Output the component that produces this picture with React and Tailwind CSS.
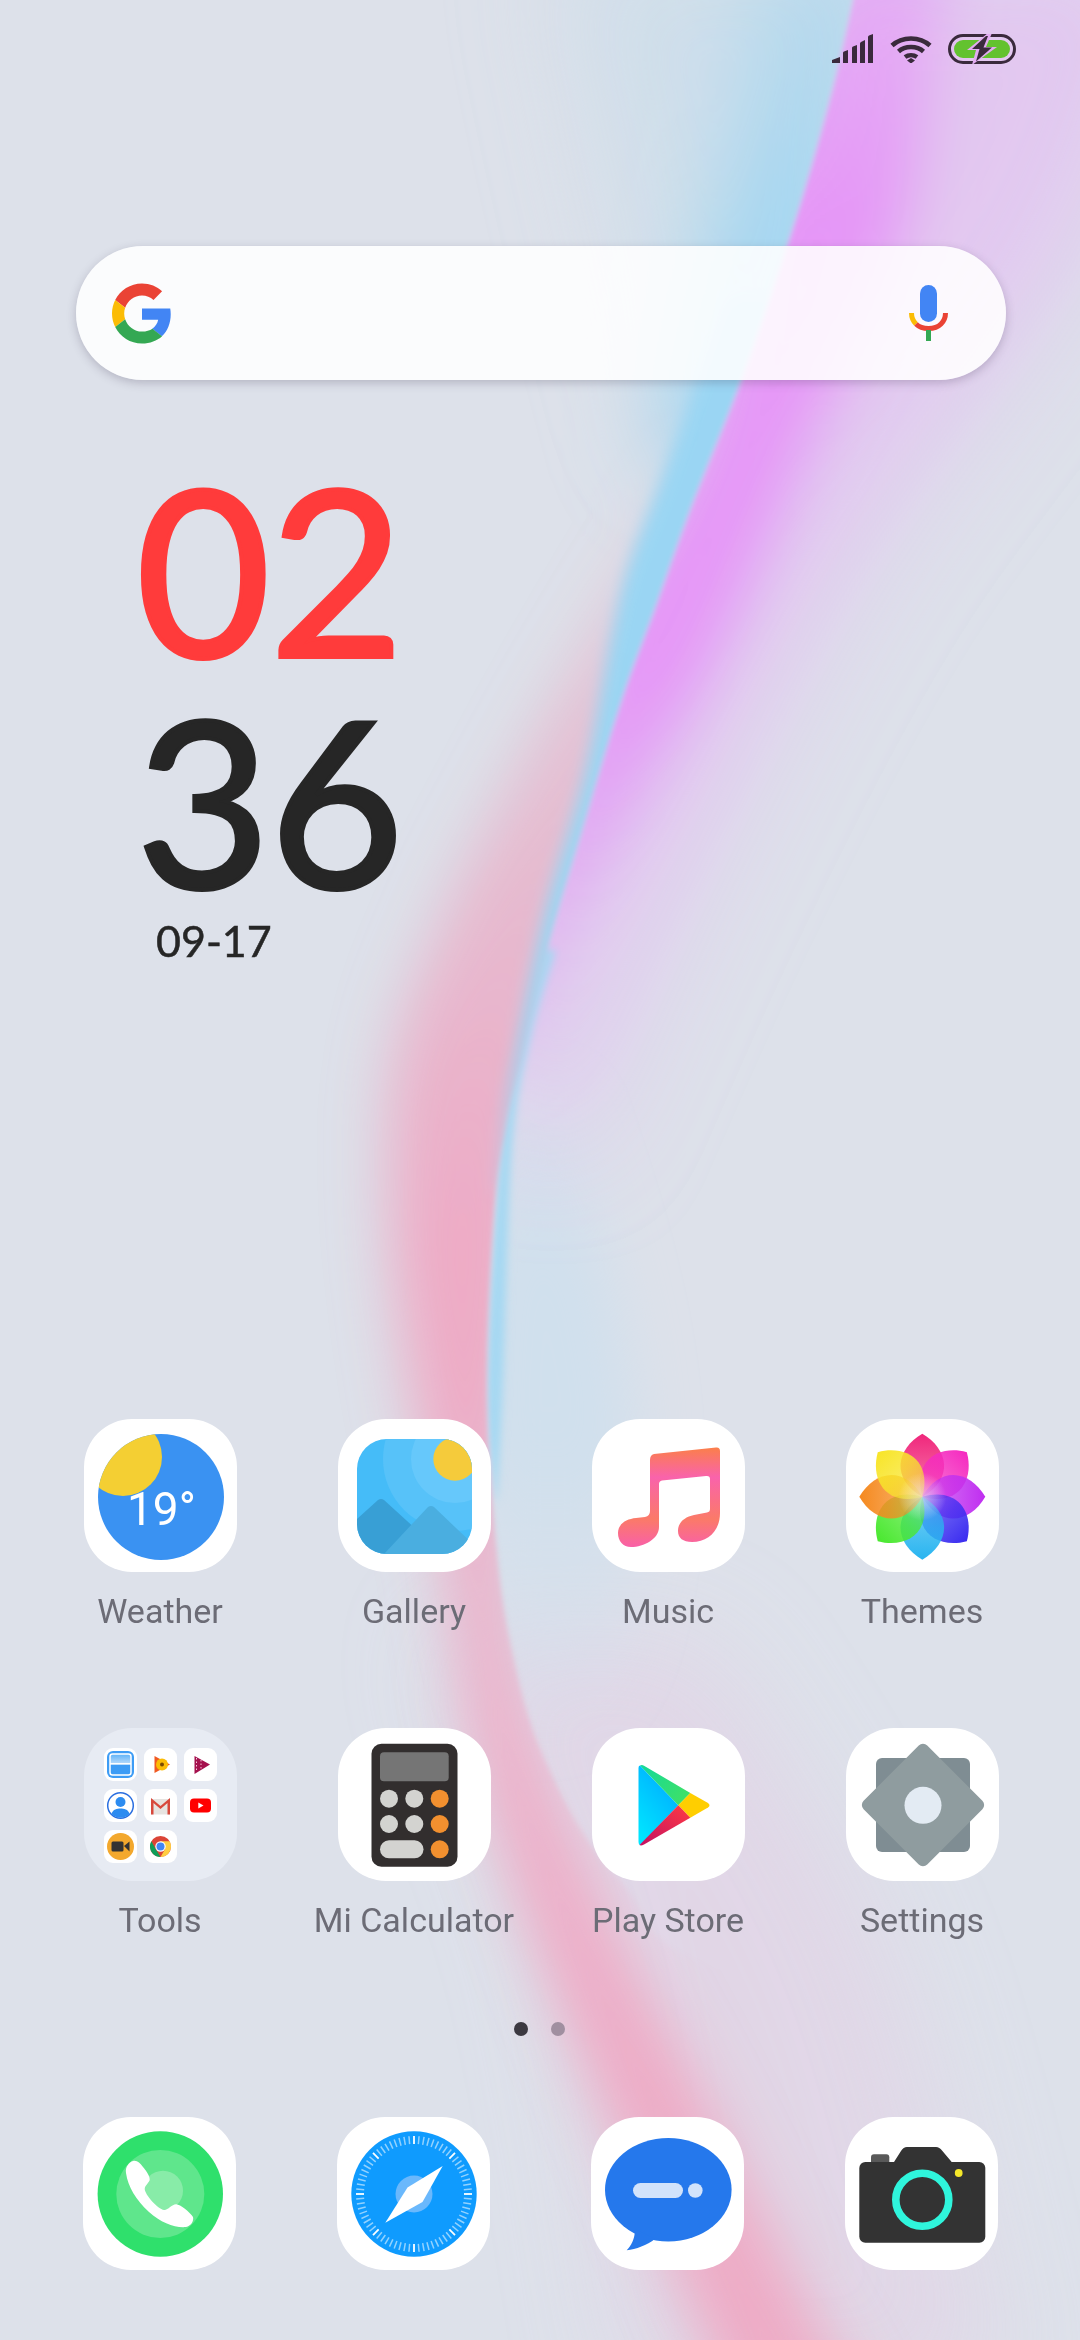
import React from "react";

// smooth line through points, returned as svg path segments
function curve(pts) {
  let d = "";
  for (let i = 0; i < pts.length - 1; i++) {
    const p0 = pts[i - 1] || pts[i];
    const p1 = pts[i];
    const p2 = pts[i + 1];
    const p3 = pts[i + 2] || p2;
    const c1 = [p1[0] + (p2[0] - p0[0]) / 6, p1[1] + (p2[1] - p0[1]) / 6];
    const c2 = [p2[0] - (p3[0] - p1[0]) / 6, p2[1] - (p3[1] - p1[1]) / 6];
    d += ` C${c1[0]} ${c1[1]} ${c2[0]} ${c2[1]} ${p2[0]} ${p2[1]}`;
  }
  return d;
}

function band(inner, outer) {
  const back = [...outer].reverse();
  return `M${inner[0][0]} ${inner[0][1]}${curve(inner)} L${back[0][0]} ${back[0][1]}${curve(back)} Z`;
}

const edge = [[866, -60], [853, 0], [832, 91], [796, 218], [745, 370], [692, 505], [657, 603], [621, 702], [585, 821], [550, 940], [523, 1053], [507, 1120], [494, 1214], [487, 1385], [494, 1520], [510, 1641], [545, 1760], [620, 1880], [760, 1980], [1400, 2050]];
const edgeD = `M${edge[0][0]} ${edge[0][1]}${curve(edge)}`;

function Wallpaper() {
  const blurBox = { filterUnits: "userSpaceOnUse", x: -300, y: -300, width: 1680, height: 2940 };
  return (
    <svg className="absolute inset-0" width="1080" height="2340" viewBox="0 0 1080 2340">
      <defs>
        <filter id="b2" {...blurBox}><feGaussianBlur stdDeviation="2.500" /></filter>
        <filter id="b3" {...blurBox}><feGaussianBlur stdDeviation="3" /></filter>
        <filter id="b8" {...blurBox}><feGaussianBlur stdDeviation="8" /></filter>
        <filter id="b30" {...blurBox}><feGaussianBlur stdDeviation="30" /></filter>
        <filter id="b45" {...blurBox}><feGaussianBlur stdDeviation="45" /></filter>
        <filter id="b55" {...blurBox}><feGaussianBlur stdDeviation="55" /></filter>
        <clipPath id="rightOf"><path d={`${edgeD} L1400 -60 Z`} /></clipPath>
        <clipPath id="leftOf"><path d={`${edgeD} L1400 2600 L-200 2600 L-200 -60 Z`} /></clipPath>
        <linearGradient id="pinkFade" gradientUnits="userSpaceOnUse" x1="0" y1="430" x2="0" y2="1250">
          <stop offset="0" stopColor="#eeaac5" stopOpacity="0" />
          <stop offset="0.35" stopColor="#e6b6cc" stopOpacity="0.75" />
          <stop offset="1" stopColor="#eeaac5" />
        </linearGradient>
        <linearGradient id="blueFade" gradientUnits="userSpaceOnUse" x1="0" y1="1100" x2="0" y2="1740">
          <stop offset="0" stopColor="#d0e0ed" stopOpacity="0.4" />
          <stop offset="0.25" stopColor="#d0e0ed" />
          <stop offset="0.55" stopColor="#d0e0ed" />
          <stop offset="1" stopColor="#d0e0ed" stopOpacity="0" />
        </linearGradient>
        <linearGradient id="magentaFade" gradientUnits="userSpaceOnUse" x1="0" y1="0" x2="0" y2="1100">
          <stop offset="0" stopColor="#e596f7" stopOpacity="0.55" />
          <stop offset="0.2" stopColor="#e596f7" />
          <stop offset="0.62" stopColor="#e596f7" />
          <stop offset="1" stopColor="#e0a8f2" stopOpacity="0.4" />
        </linearGradient>
        <linearGradient id="skyFade" gradientUnits="userSpaceOnUse" x1="0" y1="0" x2="0" y2="230">
          <stop offset="0" stopColor="#a6d6ef" stopOpacity="0.6" />
          <stop offset="1" stopColor="#9dd5f2" />
        </linearGradient>
      </defs>
      <rect width="1080" height="2340" fill="#dde1ea" />

      {/* soft tints behind the ribbons */}
      <path filter="url(#b55)" fill="#e2d4e6" opacity="0.8" d={band([[700, 1640], [880, 1950], [1000, 2400]], [[440, 1640], [560, 1950], [640, 2400]])} />
      <path filter="url(#b30)" fill="url(#blueFade)" d={band([[500, 1100], [470, 1385], [480, 1640], [520, 1780]], [[560, 1100], [630, 1385], [620, 1640], [540, 1780]])} />

      <g filter="url(#b2)">
        <g clipPath="url(#rightOf)">
          <path filter="url(#b55)" fill="#e2c8f0" d={band([[780, -60], [760, 386], [600, 772], [500, 1120]], [[1180, -60], [1090, 230], [860, 560], [700, 860], [570, 1150]])} />
          <path filter="url(#b30)" fill="url(#magentaFade)" d={band([[780, -60], [710, 386], [600, 632], [510, 912], [480, 1080]], [[950, -60], [905, 218], [815, 430], [725, 640], [640, 800], [575, 930], [525, 1060]])} />
          <path filter="url(#b3)" fill="#a5d8f2" d={band([[545, 950], [520, 1040], [500, 1150], [487, 1385], [495, 1500]], [[556, 950], [530, 1040], [512, 1150], [503, 1385], [497, 1500]])} />
        </g>

        <g clipPath="url(#leftOf)">
          <path filter="url(#b55)" fill="#cfdeea" d={band([[880, -60], [800, 218], [720, 450]], [[560, -60], [620, 218], [680, 450]])} />
          <path filter="url(#b30)" fill="url(#pinkFade)" d={band([[720, 430], [640, 772], [600, 912], [565, 1053], [535, 1214], [520, 1385], [508, 1520], [515, 1641], [545, 1769], [620, 1940], [705, 2100], [795, 2280], [870, 2420]], [[700, 430], [500, 800], [445, 912], [395, 1053], [390, 1214], [410, 1385], [445, 1560], [480, 1769], [535, 1940], [600, 2100], [680, 2280], [740, 2420]])} />
          <path filter="url(#b45)" fill="url(#skyFade)" d={band([[920, -60], [880, 91], [845, 218], [795, 370], [745, 470]], [[760, -60], [745, 91], [725, 218], [680, 370], [660, 470]])} />
          <path filter="url(#b8)" fill="#9ad5f3" d={band([[790, 300], [745, 470], [705, 560], [670, 632], [630, 772], [570, 912], [530, 1053], [512, 1120], [500, 1190]], [[730, 300], [665, 470], [630, 560], [612, 632], [585, 772], [545, 912], [516, 1053], [505, 1120], [497, 1190]])} />
        </g>
      </g>
    </svg>
  );
}

function StatusIcons() {
  const ink = "#3a2a3c";
  return (
    <div className="flex items-start gap-[16px]">
      <svg width="42" height="29" viewBox="0 0 42 29">
        <path fill={ink} d="M0 29V26L8 23V29Z M11 29V19Q11 18 12 17.600L16 16V29Z M20 29V14Q20 13 21 12.600L25 11V29Z M28 29V9.500Q28 8.500 29 8L33 6V29Z M36 29V3Q36 2 37 1.500L41 0V29Z" />
      </svg>
      <svg width="42" height="29" viewBox="0 0 42 29" fill="none" stroke={ink} strokeWidth="4.500">
        <path d="M2 11.500C12 2 30 2 40 11.500" />
        <path d="M8.500 17.500C15 11.500 27 11.500 33.500 17.500" />
        <path d="M15 23C18.500 20.500 23.500 20.500 27 23" />
        <path fill={ink} stroke="none" d="M21 24L25 26.500L21 29.500L17 26.500Z" />
      </svg>
      <svg width="68" height="30" viewBox="0 0 68 30">
        <rect x="1.500" y="1.500" width="65" height="27" rx="13.500" fill="none" stroke={ink} strokeWidth="3" />
        <rect x="6" y="6" width="56" height="18" rx="9" fill="#63c22f" />
        <path fill="#e2abf1" d="M40 -1L19 16H28L24 31L49 13H38L44 -1Z" />
        <path fill={ink} d="M38 2L24 15H31.500L28 27.500L44 13.500H35.500L40 2Z" />
      </svg>
    </div>
  );
}

function GoogleG() {
  return (
    <svg width="60" height="61" viewBox="0 0 48 48">
      <path fill="#EA4335" d="M24 9.500c3.540 0 6.710 1.220 9.210 3.600l6.850-6.850C35.900 2.380 30.470 0 24 0 14.620 0 6.510 5.380 2.560 13.220l7.980 6.190C12.430 13.720 17.740 9.500 24 9.500z" />
      <path fill="#4285F4" d="M46.980 24.550c0-1.570-.15-3.090-.38-4.550H24v9.020h12.940c-.58 2.960-2.260 5.480-4.780 7.180l7.730 6c4.510-4.180 7.090-10.360 7.090-17.650z" />
      <path fill="#FBBC05" d="M10.530 28.590c-.5-1.450-.78-2.990-.78-4.590s.27-3.140.78-4.590l-7.980-6.190C.92 16.460 0 20.120 0 24c0 3.880.92 7.540 2.560 10.780l7.970-6.190z" />
      <path fill="#34A853" d="M24 48c6.480 0 11.930-2.130 16.060-5.810l-7.730-6c-2.150 1.450-4.920 2.300-8.330 2.300-6.260 0-11.570-4.220-13.470-9.910l-7.980 6.190C6.510 42.620 14.620 48 24 48z" />
    </svg>
  );
}

function Mic() {
  return (
    <svg width="40" height="56" viewBox="0 0 40 56">
      <rect x="11" y="0" width="17" height="37" rx="8.500" fill="#4285f4" />
      <path fill="none" stroke="#fbbc05" strokeWidth="5" d="M2.500 28C2.500 33 4 36 7 39" />
      <path fill="none" stroke="#ea4335" strokeWidth="5" d="M7 39C13 45 26 45 32 39C35 36 36.500 33 36.500 28" />
      <rect x="17" y="45" width="5" height="11" fill="#34a853" />
    </svg>
  );
}

function WeatherIcon() {
  return (
    <svg width="153" height="153" viewBox="0 0 153 153">
      <defs>
        <clipPath id="wx"><circle cx="77" cy="78" r="63" /></clipPath>
      </defs>
      <circle cx="77" cy="78" r="63" fill="#3a92f2" />
      <circle cx="39" cy="38" r="39" fill="#f4cf33" clipPath="url(#wx)" />
      <text x="43" y="106" fontFamily="Roboto" fontSize="46" fill="#fff">19°</text>
    </svg>
  );
}

function GalleryIcon() {
  return (
    <svg width="153" height="153" viewBox="0 0 153 153">
      <defs>
        <clipPath id="gal"><rect x="19" y="20" width="115" height="115" rx="30" /></clipPath>
      </defs>
      <g clipPath="url(#gal)">
        <rect x="19" y="20" width="115" height="115" fill="#45bcf8" />
        <circle cx="117" cy="40" r="72" fill="#57c2f9" />
        <circle cx="117" cy="40" r="44" fill="#66c8fb" />
        <circle cx="117" cy="40" r="21.700" fill="#f5cb3b" />
        <path fill="#389fd5" d="M10 108L40 81Q43 79 46 81L80 112L60 140H10Z" />
        <path fill="#4aaee0" d="M46 135L90 88Q93 86 96 88L140 130V140H46Z" />
      </g>
    </svg>
  );
}

function MusicIcon() {
  return (
    <svg width="153" height="153" viewBox="0 0 153 153">
      <defs>
        <linearGradient id="mus" x1="0" y1="0" x2="0" y2="1">
          <stop offset="0" stopColor="#fb7f4a" />
          <stop offset="0.3" stopColor="#f963ab" />
          <stop offset="0.72" stopColor="#fb7a68" />
          <stop offset="1" stopColor="#f960a8" />
        </linearGradient>
      </defs>
      <path fill="url(#mus)" d="M62 35L124 28.500Q128 28 128 32L128 94C128 112 116 123 100 123C91 123 86 119 86 112C86 103 93 98 102 96L115 93.500Q118 93 118 90L118 60Q118 56.500 114 57L70 61.500Q67 62 67 65L67 108C67 120 52 128 39 128C31 128 26 122 26 114C26 105 34 100 44 99L53 98Q58 97 58 92L58 41Q58 36 62 35Z" />
    </svg>
  );
}

const petals = ["#f0287c", "#f52cc0", "#c02ff0", "#3b2df0", "#2ab5f0", "#4ae830", "#f58a20", "#f8e52a"];

function ThemesIcon() {
  return (
    <svg width="153" height="153" viewBox="0 0 153 153">
      <defs>
        {petals.map((c, i) => (
          <linearGradient key={c} id={`pet${i}`} gradientUnits="userSpaceOnUse" x1="0" y1="-62" x2="0" y2="0">
            <stop offset="0" stopColor={c} />
            <stop offset="0.5" stopColor={c} stopOpacity="0.8" />
            <stop offset="1" stopColor={c} stopOpacity="0.5" />
          </linearGradient>
        ))}
        <radialGradient id="petCore">
          <stop offset="0" stopColor="#e8e8e8" stopOpacity="0.6" />
          <stop offset="1" stopColor="#fff" stopOpacity="0" />
        </radialGradient>
      </defs>
      <g transform="translate(76.300 77.700)">
        {petals.map((c, i) => (
          <path key={c} transform={`rotate(${i * 45})`} fill={`url(#pet${i})`} d="M0 0C-32 -18 -26 -48 0 -63C26 -48 32 -18 0 0Z" />
        ))}
        <circle r="24" fill="url(#petCore)" />
      </g>
    </svg>
  );
}

function CalculatorIcon() {
  return (
    <svg width="153" height="153" viewBox="0 0 153 153">
      <rect x="33.500" y="15.700" width="86" height="123" rx="10" fill="#322e2e" />
      <rect x="42" y="24.300" width="68.700" height="29" rx="4" fill="#757575" />
      {[70.700, 96].map((y) => (
        <g key={y}>
          <circle cx="51" cy={y} r="9" fill="#d3d3d0" />
          <circle cx="76.300" cy={y} r="9" fill="#d3d3d0" />
          <circle cx="101.700" cy={y} r="9" fill="#f2902f" />
        </g>
      ))}
      <rect x="42" y="112.300" width="43.500" height="18" rx="9" fill="#d3d3d0" />
      <circle cx="101.700" cy="121.300" r="9" fill="#f2902f" />
    </svg>
  );
}

function PlayIcon() {
  return (
    <svg width="153" height="153" viewBox="0 0 153 153">
      <defs>
        <linearGradient id="plB" x1="0.800" y1="0" x2="0.200" y2="1">
          <stop offset="0" stopColor="#00a8ff" />
          <stop offset="1" stopColor="#00e6ff" />
        </linearGradient>
        <linearGradient id="plG" x1="0" y1="0" x2="1" y2="0.500">
          <stop offset="0" stopColor="#12d99a" />
          <stop offset="1" stopColor="#3ce06a" />
        </linearGradient>
        <linearGradient id="plR" x1="1" y1="0" x2="0" y2="1">
          <stop offset="0" stopColor="#ff3a44" />
          <stop offset="1" stopColor="#c31162" />
        </linearGradient>
      </defs>
      <path fill="url(#plB)" d="M46.500 40Q46.500 37.500 48 37.500L86.300 77.300L48 117.300Q46.500 116.500 46.500 114Z" />
      <path fill="url(#plG)" d="M48 37.500Q50 36.500 52 37.700L98.300 65L86.300 77.300Z" />
      <path fill="#ffce00" d="M98.300 65L116 75Q119 77.300 116 79.500L98.300 89.800L86.300 77.300Z" />
      <path fill="url(#plR)" d="M86.300 77.300L98.300 89.800L52 116.500Q49 118 47.500 117Z" />
    </svg>
  );
}

function SettingsIcon() {
  return (
    <svg width="153" height="153" viewBox="0 0 153 153">
      <rect x="30" y="30" width="94" height="94" rx="6" fill="#7f8d93" />
      <rect x="32" y="32" width="90" height="90" rx="6" fill="#8f9c9f" transform="rotate(45 77 77)" />
      <circle cx="77" cy="77.300" r="18.500" fill="#e3ebf3" />
    </svg>
  );
}

function PhoneIcon() {
  return (
    <svg width="153" height="153" viewBox="0 0 153 153">
      <circle cx="77.300" cy="77" r="62.700" fill="#2fe06c" />
      <circle cx="77.300" cy="77" r="44" fill="#5fe68c" />
      <circle cx="80" cy="73.700" r="20" fill="#88eca8" />
      <path fill="#fff" d="M50 44C54 43 57 46 60 50C64 55 67 59 66.700 63C66 66 62 68 61.700 72C62 78 75 92 81 93C85 93.500 89 87 93.300 87.300C97 87.500 107 95 110 100C111 104 108 109 103 110C92 111 78 106 66 95C53 83 45 70 43 56C42 50 46 45 50 44Z" />
    </svg>
  );
}

const ticks = Array.from({ length: 72 }, (_, i) => i * 5);

function SafariIcon() {
  return (
    <svg width="153" height="153" viewBox="0 0 153 153">
      <circle cx="77" cy="77" r="62.700" fill="#0f9bfe" />
      {ticks.map((a) => {
        const major = a % 45 === 0;
        return (
          <line key={a} x1="77" y1="19" x2="77" y2="27" stroke="#fff" strokeOpacity={major ? 1 : 0.55} strokeWidth={major ? 1.800 : 1.500} transform={`rotate(${a} 77 77)`} />
        );
      })}
      <circle cx="77" cy="77" r="18.500" fill="#6ab8fc" />
      <path fill="#fff" d="M105.700 49L85.500 85L48.300 105.700L70.500 70.500Z" />
    </svg>
  );
}

function MessagesIcon() {
  return (
    <svg width="153" height="153" viewBox="0 0 153 153">
      <ellipse cx="77.300" cy="72.700" rx="63.300" ry="51.700" fill="#2578ec" />
      <path fill="#2578ec" d="M44 112C44 122 40 129 35.700 133.300C45 132.500 56 128 64 122Z" />
      <rect x="42" y="66" width="50" height="15" rx="7.500" fill="#d2e3fb" />
      <circle cx="104.300" cy="73.500" r="7.300" fill="#d2e3fb" />
    </svg>
  );
}

function CameraIcon() {
  return (
    <svg width="153" height="153" viewBox="0 0 153 153">
      <rect x="26" y="37.300" width="18.300" height="12" rx="3" fill="#595959" />
      <path fill="#333" d="M49 45L56 34Q58.500 30 62 30H91Q94.500 30 97 33.500L106.700 45Z" />
      <rect x="14.300" y="45" width="126" height="80.700" rx="6" fill="#333" />
      <circle cx="77.300" cy="82.700" r="26.500" fill="none" stroke="#2ff5dc" strokeWidth="7.600" />
      <circle cx="113.700" cy="56" r="3.900" fill="#f5e82a" />
    </svg>
  );
}

// the eight small tiles inside the Tools folder
const miniIcons = [
  <g key="a">
    <rect x="3" y="3" width="27" height="27" rx="6" fill="#3d9cf5" />
    <rect x="6" y="6" width="21" height="21" rx="2.500" fill="url(#miniA)" stroke="#fff" strokeWidth="1.500" />
    <rect x="6" y="15" width="21" height="1.500" fill="#fff" />
  </g>,
  <g key="b">
    <path fill="#f05a22" d="M10.500 8L26 16.500L10.500 25Z" />
    <circle cx="18" cy="16.500" r="6" fill="#fbbc05" />
    <circle cx="18" cy="16.500" r="2" fill="#7a4a00" />
  </g>,
  <g key="c">
    <path fill="#a5114e" d="M10.500 8L26 16.500L10.500 26Z" />
    <path stroke="#f5c6d8" strokeWidth="1" strokeDasharray="1.500 2" d="M12.500 10V24M17 12V21.500" />
  </g>,
  <g key="d">
    <circle cx="16.500" cy="16.500" r="12.800" fill="#fff" stroke="#2b6fe0" strokeWidth="1.500" />
    <circle cx="16.500" cy="13" r="5" fill="#2d8cf0" />
    <path fill="#2d8cf0" d="M7.500 25C9 20 13 19.500 16.500 19.500C20 19.500 24 20 25.500 25C21 30 12 30 7.500 25Z" />
  </g>,
  <g key="e">
    <path fill="#e7e3e0" d="M7 10H26V25.500H7Z" />
    <path fill="#d8483b" d="M7 9L16.500 17L26 9V25.500H23.500V14L16.500 20L9.500 14V25.500H7Z" />
  </g>,
  <g key="f">
    <rect x="6" y="9.500" width="21" height="14" rx="4" fill="#f00" />
    <path fill="#fff" d="M14.300 13.500L19.500 16.500L14.300 19.500Z" />
  </g>,
  <g key="g">
    <circle cx="16.500" cy="16.500" r="13.500" fill="#f3a82d" />
    <rect x="7.500" y="11.500" width="12" height="10" rx="1.500" fill="#333" />
    <path fill="#333" d="M20 16L25.500 11.500V21.500Z" />
  </g>,
  <g key="h">
    <circle cx="16.500" cy="16.500" r="10.500" fill="#db4437" />
    <path fill="#0f9d58" d="M7.400 11.300L11.800 19.200L16.500 27C10.700 27 6 22.300 6 16.500C6 14.600 6.500 12.800 7.400 11.300Z" />
    <path fill="#ffcd40" d="M16.500 11.300H25.600C26.500 12.800 27 14.600 27 16.500C27 22.300 22.300 27 16.500 27L21 19.200Z" />
    <circle cx="16.500" cy="16.500" r="5.200" fill="#fff" />
    <circle cx="16.500" cy="16.500" r="4" fill="#4285f4" />
  </g>,
];

function Tools() {
  return (
    <div className="w-[153px] h-[153px] rounded-[48px] bg-[#e7ebf3] grid grid-cols-3 content-start gap-[8px] p-[20px]">
      {miniIcons.map((icon) => (
        <div key={icon.key} className="w-[33px] h-[33px] rounded-[9px] bg-white">
          <svg width="33" height="33" viewBox="0 0 33 33">
            <defs>
              <linearGradient id="miniA" x1="0" y1="0" x2="0" y2="1">
                <stop offset="0" stopColor="#5db2f8" />
                <stop offset="0.48" stopColor="#bcdcfa" />
                <stop offset="0.52" stopColor="#3d9cf5" />
              </linearGradient>
            </defs>
            {icon}
          </svg>
        </div>
      ))}
    </div>
  );
}

function Tile({ children }) {
  return <div className="w-[153px] h-[153px] rounded-[48px] bg-white">{children}</div>;
}

function AppCell({ label, children }) {
  return (
    <div className="flex flex-col items-center">
      {children}
      <span className="mt-[19px] h-[40px] leading-[40px] text-[34px] whitespace-nowrap text-[#6c6c76]">{label}</span>
    </div>
  );
}

const apps = [
  { label: "Weather", icon: <WeatherIcon /> },
  { label: "Gallery", icon: <GalleryIcon /> },
  { label: "Music", icon: <MusicIcon /> },
  { label: "Themes", icon: <ThemesIcon /> },
  { label: "Tools", folder: true },
  { label: "Mi Calculator", icon: <CalculatorIcon /> },
  { label: "Play Store", icon: <PlayIcon /> },
  { label: "Settings", icon: <SettingsIcon /> },
];

const dock = [<PhoneIcon key="p" />, <SafariIcon key="s" />, <MessagesIcon key="m" />, <CameraIcon key="c" />];

export default function App() {
  return (
    <div className="relative w-[1080px] h-[2340px] overflow-hidden bg-[#dde1ea] font-[Roboto,sans-serif]">
      <Wallpaper />
      <div className="relative flex flex-col h-full">
        <div className="flex justify-end pt-[34px] pr-[64px]">
          <StatusIcons />
        </div>

        <div className="mt-[182px] ml-[76px] w-[930px] h-[134px] rounded-full bg-white/88 shadow-[0_3px_10px_rgba(60,50,80,0.25)] flex items-center justify-between pl-[36px] pr-[57px]">
          <GoogleG />
          <Mic />
        </div>

        <div className="mt-[72px] ml-[136px] font-[Lato,sans-serif] text-[232px] leading-[231px] tracking-[-1px] [-webkit-text-stroke:4px_currentColor]">
          <div className="h-[231px] text-[#ff3b3b]">02</div>
          <div className="h-[231px] text-[#262626]">36</div>
          <div className="mt-[1px] ml-[20px] text-[43px] leading-[52px] tracking-normal [-webkit-text-stroke:0.5px_currentColor] text-[#262626]">09-17</div>
        </div>

        <div className="mt-auto ml-[33px] grid grid-cols-[repeat(4,254px)] gap-y-[97px]">
          {apps.map((app) => (
            <AppCell key={app.label} label={app.label}>
              {app.folder ? <Tools /> : <Tile>{app.icon}</Tile>}
            </AppCell>
          ))}
        </div>

        <div className="mt-[82px] flex justify-center gap-[23px] ml-[-1px]">
          <div className="w-[14px] h-[14px] rounded-full bg-[#3b3840]" />
          <div className="w-[14px] h-[14px] rounded-full bg-[#a08fa0]" />
        </div>

        <div className="mt-[81px] mb-[70px] ml-[32px] grid grid-cols-[repeat(4,254px)] justify-items-center">
          {dock.map((icon) => (
            <Tile key={icon.key}>{icon}</Tile>
          ))}
        </div>
      </div>
    </div>
  );
}
